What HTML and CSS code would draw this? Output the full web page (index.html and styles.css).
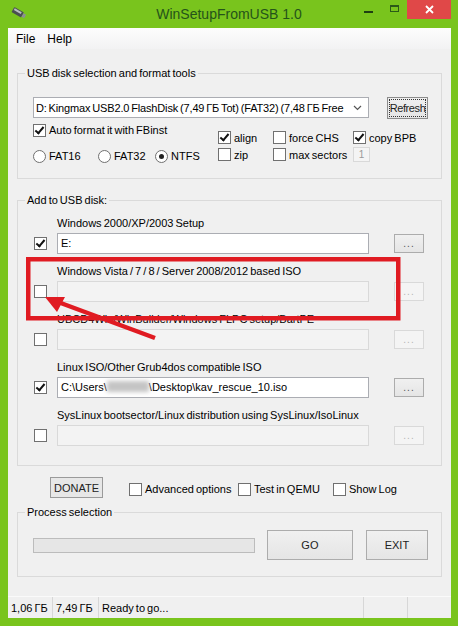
FILE: index.html
```html
<!DOCTYPE html>
<html lang="en">
<head>
    <meta charset="UTF-8">
    <meta name="viewport" content="width=device-width, initial-scale=1.0">
    <title>WinSetupFromUSB 1.0</title>
    <link rel="stylesheet" href="styles.css">
</head>
<body>

<div class="window">
    <div class="titlebar">
        <div class="tb-left">
            <svg class="app-icon" width="16" height="12" viewBox="0 0 16 12">
                <g transform="rotate(30 8 6)">
                    <rect x="1" y="3" width="11" height="6" rx="1" fill="#4a4f52"/>
                    <rect x="2" y="4" width="8" height="2" fill="#b9bec2"/>
                    <rect x="12" y="4" width="3" height="4" fill="#8a9094"/>
                </g>
            </svg>
        </div>
        <div class="title">WinSetupFromUSB 1.0</div>
        <div class="caption">
            <span class="cap cap-min"><i></i></span>
            <span class="cap cap-max"><i></i></span>
            <span class="cap cap-close">
                <svg width="9" height="9" viewBox="0 0 9 9"><path d="M1 1 L8 8 M8 1 L1 8" stroke="#fff" stroke-width="1.8"/></svg>
            </span>
        </div>
    </div>

    <div class="client">
        <div class="menubar">
            <span>File</span>
            <span>Help</span>
        </div>

        <fieldset class="group group-usb">
            <legend>USB disk selection and format tools</legend>
            <div class="disk-row">
                <div class="combo">
                    <span class="combo-text">D: Kingmax USB2.0 FlashDisk (7,49 ГБ Tot) (FAT32) (7,48 ГБ Free</span>
                    <svg class="chevron" width="9" height="6" viewBox="0 0 9 6"><path d="M1 1 L4.5 4.5 L8 1" fill="none" stroke="#555" stroke-width="1.2"/></svg>
                </div>
                <div class="btn btn-refresh"><span>Refresh</span></div>
            </div>
            <div class="format-opts">
                <div class="opts-left">
                    <div class="check"><span class="cb on"></span>Auto format it with FBinst</div>
                    <div class="radios">
                        <div class="radio-item fat16"><span class="rb"></span>FAT16</div>
                        <div class="radio-item fat32"><span class="rb"></span>FAT32</div>
                        <div class="radio-item"><span class="rb on"></span>NTFS</div>
                    </div>
                </div>
                <div class="opts-right">
                    <div class="check"><span class="cb on"></span>align</div>
                    <div class="check"><span class="cb"></span>force CHS</div>
                    <div class="check"><span class="cb on"></span>copy BPB</div>
                    <div class="check"><span class="cb"></span>zip</div>
                    <div class="check"><span class="cb"></span>max sectors</div>
                    <div class="num-field">1</div>
                </div>
            </div>
        </fieldset>

        <fieldset class="group group-add">
            <legend>Add to USB disk:</legend>

            <div class="src-row">
                <div class="src-label">Windows 2000/XP/2003 Setup</div>
                <span class="cb on"></span>
                <div class="field">E:</div>
                <div class="btn btn-dots">...</div>
            </div>

            <div class="src-row">
                <div class="src-label">Windows Vista / 7 / 8 / Server 2008/2012 based ISO</div>
                <span class="cb"></span>
                <div class="field disabled"></div>
                <div class="btn btn-dots disabled">...</div>
            </div>

            <div class="src-row">
                <div class="src-label">UBCD4Win/WinBuilder/Windows FLPC setup/BartPE</div>
                <span class="cb"></span>
                <div class="field disabled"></div>
                <div class="btn btn-dots disabled">...</div>
            </div>

            <div class="src-row">
                <div class="src-label">Linux ISO/Other Grub4dos compatible ISO</div>
                <span class="cb on"></span>
                <div class="field">C:\Users\<span class="blurred"></span>\Desktop\kav_rescue_10.iso</div>
                <div class="btn btn-dots">...</div>
            </div>

            <div class="src-row">
                <div class="src-label">SysLinux bootsector/Linux distribution using SysLinux/IsoLinux</div>
                <span class="cb"></span>
                <div class="field disabled"></div>
                <div class="btn btn-dots disabled">...</div>
            </div>
        </fieldset>

        <div class="extra-row">
            <div class="btn btn-donate">DONATE</div>
            <div class="check opt-adv"><span class="cb"></span>Advanced options</div>
            <div class="check opt-qemu"><span class="cb"></span>Test in QEMU</div>
            <div class="check"><span class="cb"></span>Show Log</div>
        </div>

        <fieldset class="group group-process">
            <legend>Process selection</legend>
            <div class="process-row">
                <div class="progress"></div>
                <div class="btn btn-big btn-go">GO</div>
                <div class="btn btn-big btn-exit">EXIT</div>
            </div>
        </fieldset>

        <div class="statusbar">
            <div class="st-cell st-free">1,06 ГБ</div>
            <div class="st-cell st-total">7,49 ГБ</div>
            <div class="st-cell st-msg">Ready to go...</div>
            <div class="st-cell st-empty"></div>
            <div class="st-cell st-grip"></div>
        </div>
    </div>

    <!-- annotation drawn over the screenshot -->
    <svg class="annotation" width="458" height="626" viewBox="0 0 458 626">
        <rect x="28.25" y="259.25" width="370" height="59" fill="none" stroke="#e01b22" stroke-width="4.5"/>
        <line x1="58" y1="302" x2="155" y2="338" stroke="#e01b22" stroke-width="4.5"/>
        <polygon points="45,297 65,297 57,312" fill="#e01b22"/>
    </svg>
</div>

</body>
</html>
```

FILE: styles.css
```css
body {
    margin: 0;
    font-family: "Liberation Sans", Arial, sans-serif;
    font-size: 11px;
    word-spacing: -1px;
    color: #000;
    background: #fff;
}
.window {
    position: relative;
    width: 458px;
    height: 626px;
    background: #79c41d;
    display: flex;
    flex-direction: column;
}
.titlebar {
    display: grid;
    grid-template-columns: 1fr auto 1fr;
    height: 28px;
}
.app-icon {
    margin: 7px 0 0 11px;
}
.title {
    padding-top: 6px;
    font-size: 14px;
    line-height: 16px;
    word-spacing: 0;
    color: #25531a;
}
.caption {
    justify-self: end;
    display: flex;
    align-items: flex-start;
    margin-right: 7px;
}
.cap {
    width: 26px;
    height: 19px;
    display: flex;
    align-items: center;
    justify-content: center;
}
.cap-min i {
    display: block;
    width: 9px;
    height: 2px;
    margin-top: 4px;
    background: #1e3f12;
}
.cap-max i {
    display: block;
    width: 9px;
    height: 7px;
    box-sizing: border-box;
    border: 1px solid #2b5a18;
    border-top-width: 2px;
    margin-top: -2px;
}
.cap-close {
    width: 44px;
    background: #e04848;
}

.client {
    flex: 1;
    margin: 0 7px 8px 8px;
    background: #f0f0f0;
    display: flex;
    flex-direction: column;
}
.menubar {
    height: 21px;
    display: flex;
    align-items: center;
    padding-left: 2px;
    font-size: 12px;
    background: linear-gradient(#fdfdfd, #f2f2f3);
}
.menubar span {
    padding: 0 6px;
}

.group {
    margin: 0 9px;
    border: 1px solid #dadada;
    padding: 0 13px 0 15px;
    min-width: 0;
}
.group legend {
    padding: 0 2px;
    margin-left: -8px;
    line-height: 16px;
}
.group-usb {
    margin-top: 16px;
    padding-top: 16px;
    padding-bottom: 13px;
}
.disk-row {
    display: flex;
    align-items: flex-start;
    height: 22px;
}
.combo {
    width: 336px;
    height: 21px;
    box-sizing: border-box;
    border: 1px solid #abadb3;
    background: #fff;
    display: flex;
    align-items: center;
    padding: 0 6px 0 2px;
    overflow: hidden;
}
.combo-text {
    flex: 1;
    white-space: nowrap;
    overflow: hidden;
    letter-spacing: -0.15px;
}
.chevron {
    flex: none;
    margin-left: 3px;
}
.btn {
    box-sizing: border-box;
    border: 1px solid #acacac;
    background: linear-gradient(#f0f0f0, #e5e5e5);
    display: flex;
    align-items: center;
    justify-content: center;
    color: #222;
}
.btn-refresh {
    width: 41px;
    height: 22px;
    margin-left: 18px;
    border-color: #8c8c8c;
    padding: 1px;
}
.btn-refresh span {
    display: block;
    width: 100%;
    height: 100%;
    box-sizing: border-box;
    outline: 1px dotted #333;
    outline-offset: -1px;
    line-height: 18px;
    text-align: center;
    letter-spacing: -0.4px;
}
.format-opts {
    display: flex;
    margin-top: 2px;
}
.opts-left {
    width: 185px;
}
.check {
    display: flex;
    align-items: center;
    gap: 3px;
    height: 17px;
    white-space: nowrap;
}
.cb {
    flex: none;
    width: 13px;
    height: 13px;
    box-sizing: border-box;
    border: 1px solid #707070;
    background: #fff;
    display: inline-flex;
    align-items: center;
    justify-content: center;
}
.cb.on::after {
    content: "";
    width: 3px;
    height: 7px;
    border: solid #111;
    border-width: 0 2px 2px 0;
    transform: rotate(40deg);
    margin-top: -2px;
}
.opts-left .check {
    height: 18px;
}
.radios {
    display: flex;
    margin-top: 8px;
    height: 18px;
    align-items: center;
}
.radio-item {
    display: flex;
    align-items: center;
    gap: 3px;
}
.radio-item.fat16 {
    width: 65px;
}
.radio-item.fat32 {
    width: 57px;
}
.rb {
    width: 13px;
    height: 13px;
    box-sizing: border-box;
    border: 1px solid #707070;
    border-radius: 50%;
    background: #fff;
    display: inline-flex;
    align-items: center;
    justify-content: center;
}
.rb.on::after {
    content: "";
    width: 5px;
    height: 5px;
    border-radius: 50%;
    background: #222;
}
.opts-right {
    display: grid;
    grid-template-columns: 55px 80px auto;
    grid-auto-rows: 17px;
    padding-top: 8px;
}
.num-field {
    width: 17px;
    height: 15px;
    box-sizing: border-box;
    border: 1px solid #d9d9d9;
    color: #9a9a9a;
    background: #f4f4f4;
    font-size: 10px;
    text-align: center;
    line-height: 13px;
    align-self: center;
}

.group-add {
    margin-top: 13px;
    padding-top: 7px;
    padding-bottom: 19px;
}
.src-row {
    display: grid;
    grid-template-columns: 24px 312px 25px 30px;
    grid-template-rows: 16px 21px;
    row-gap: 2px;
    align-items: center;
}
.src-row + .src-row {
    margin-top: 9px;
}
.src-label {
    grid-column: 2 / 5;
    grid-row: 1;
    white-space: nowrap;
    line-height: 16px;
}
.src-row .cb {
    grid-column: 1;
    grid-row: 2;
    margin-left: 1px;
}
.field {
    grid-column: 2;
    grid-row: 2;
    height: 21px;
    box-sizing: border-box;
    border: 1px solid #abadb3;
    background: #fff;
    padding-left: 3px;
    line-height: 19px;
    white-space: nowrap;
    overflow: hidden;
}
.field.disabled {
    background: #f3f3f3;
    border-color: #d9d9d9;
}
.blurred {
    display: inline-block;
    width: 42px;
    height: 11px;
    vertical-align: -1px;
    background: #c4c4c4;
    filter: blur(2px);
}
.btn-dots {
    grid-column: 4;
    grid-row: 2;
    height: 19px;
    font-size: 10px;
    letter-spacing: 1px;
    color: #555;
    line-height: 1;
}
.btn-dots.disabled {
    border-color: #d9d9d9;
    background: #f4f4f4;
    color: #b4b4b4;
}

.extra-row {
    display: flex;
    align-items: center;
    margin-top: 11px;
    height: 21px;
}
.btn-donate {
    width: 53px;
    height: 21px;
    margin-left: 42px;
    border-color: #9a9a9a;
    background: #e7e7e7;
}
.extra-row .check {
    margin-top: 3px;
}
.opt-adv {
    margin-left: 26px;
    width: 109px;
}
.opt-qemu {
    width: 95px;
}

.group-process {
    margin-top: 6px;
    padding-top: 10px;
    padding-bottom: 16px;
}
.process-row {
    display: flex;
    align-items: center;
}
.progress {
    width: 225px;
    height: 15px;
    box-sizing: border-box;
    border: 1px solid #bcbcbc;
    background: #e6e6e6;
}
.btn-big {
    height: 30px;
}
.btn-go {
    width: 87px;
    margin-left: 12px;
}
.btn-exit {
    width: 63px;
    margin-left: 13px;
}

.statusbar {
    margin-top: auto;
    height: 21px;
    display: flex;
    border-top: 1px solid #fafafa;
}
.st-cell {
    box-sizing: border-box;
    padding: 5px 0 0 3px;
    border-right: 1px solid #d7d7d7;
    white-space: nowrap;
}
.st-free {
    width: 45px;
}
.st-total {
    width: 46px;
}
.st-msg {
    width: 265px;
}
.st-empty {
    width: 44px;
}
.st-grip {
    flex: 1;
    border-right: none;
}

.annotation {
    position: absolute;
    top: 0;
    left: 0;
    pointer-events: none;
}
```
